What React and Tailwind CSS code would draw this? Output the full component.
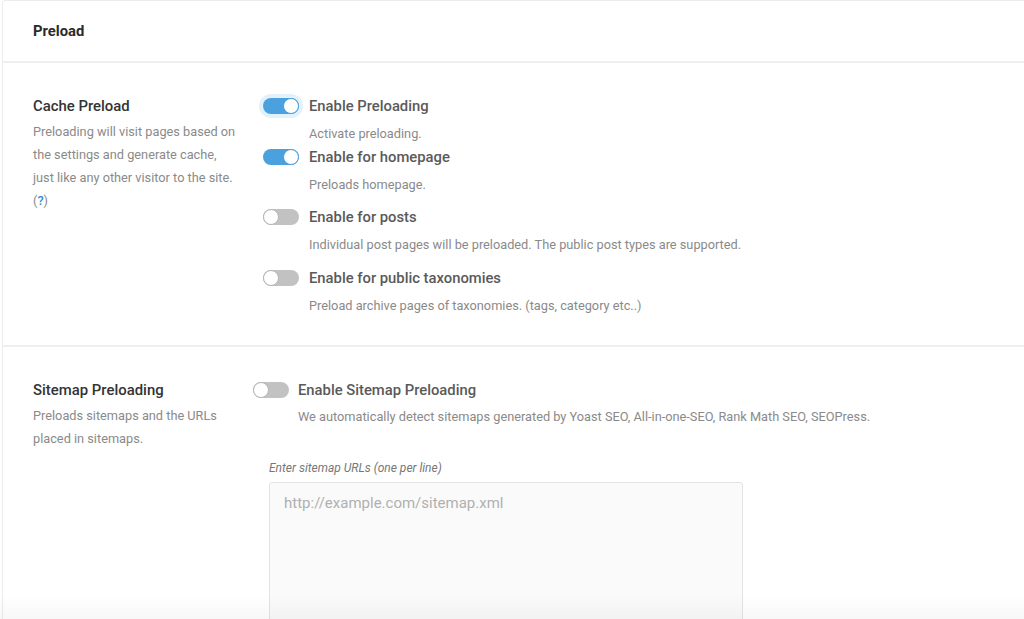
import React, { useState } from "react";

const opcionesCache = [
  {
    id: "preload",
    titulo: "Enable Preloading",
    descripcion: "Activate preloading.",
    activo: true,
    foco: true,
    margen: "mt-0"
  },
  {
    id: "homepage",
    titulo: "Enable for homepage",
    descripcion: "Preloads homepage.",
    activo: true,
    foco: false,
    margen: "mt-[3px]"
  },
  {
    id: "posts",
    titulo: "Enable for posts",
    descripcion: "Individual post pages will be preloaded. The public post types are supported.",
    activo: false,
    foco: false,
    margen: "mt-[12px]"
  },
  {
    id: "taxonomies",
    titulo: "Enable for public taxonomies",
    descripcion: "Preload archive pages of taxonomies. (tags, category etc..)",
    activo: false,
    foco: false,
    margen: "mt-[13px]"
  }
];

function Toggle({ activo, foco, onClick }) {
  return (
    <button
      type="button"
      onClick={onClick}
      className={
        "relative shrink-0 w-[36px] h-[16px] rounded-full transition-colors " +
        (activo ? "bg-[#4aa1de] " : "bg-[#c2c2c2] ") +
        (foco ? "ring-4 ring-[#e2f1fc]" : "")
      }
    >
      <span
        className={
          "absolute top-[0px] w-[16px] h-[16px] rounded-full bg-white border " +
          (activo ? "right-0 border-[#4aa1de]" : "left-0 border-[#b5b5b5]")
        }
      />
    </button>
  );
}

export default function App() {
  const [opciones, setOpciones] = useState(opcionesCache);
  const [sitemap, setSitemap] = useState(false);

  function cambiar(id) {
    setOpciones(
      opciones.map(function (opcion) {
        if (opcion.id === id) {
          return { ...opcion, activo: !opcion.activo };
        }
        return opcion;
      })
    );
  }

  return (
    <div className="relative h-[619px] overflow-hidden bg-white font-['Roboto',sans-serif]">
      <div className="ml-[2px] -mr-[10px] border-l border-t border-[#ececec] rounded-tl-[4px] bg-white">
        <div className="h-[62px] flex items-center pl-[30px] border-b-2 border-[#efefef]">
          <h1 className="text-[14.8px] font-bold text-[#2b2b2b]">Preload</h1>
        </div>

        <div className="flex pl-[30px] pt-[33px] pb-[29px] border-b-2 border-[#efefef]">
          <div className="w-[230px] shrink-0">
            <h2 className="text-[14.9px] font-medium leading-[20px] text-[#333]">Cache Preload</h2>
            <p className="mt-[4px] text-[12.75px] leading-[23px] text-[#8a8a8a] pr-[26px]">
              Preloading will visit pages based on the settings and generate cache, just like any other visitor to the site.
              <br />
              (<span className="text-[#2f8fd8] font-medium">?</span>)
            </p>
          </div>

          <div className="flex flex-col">
            {opciones.map(function (opcion) {
              return (
                <div key={opcion.id} className={opcion.margen}>
                  <div className="flex items-center gap-[10px]">
                    <Toggle
                      activo={opcion.activo}
                      foco={opcion.foco}
                      onClick={function () {
                        cambiar(opcion.id);
                      }}
                    />
                    <span className="text-[14.8px] font-medium leading-[20px] text-[#5a5a5a]">{opcion.titulo}</span>
                  </div>
                  <p className="mt-[8px] pl-[46px] text-[12.75px] leading-[20px] text-[#8a8a8a]">{opcion.descripcion}</p>
                </div>
              );
            })}
          </div>
        </div>

        <div className="flex pl-[30px] pt-[33px]">
          <div className="w-[220px] shrink-0">
            <h2 className="text-[14.9px] font-medium leading-[20px] text-[#333]">Sitemap Preloading</h2>
            <p className="mt-[4px] text-[12.75px] leading-[23px] text-[#8a8a8a] pr-[20px]">
              Preloads sitemaps and the URLs placed in sitemaps.
            </p>
          </div>

          <div className="flex flex-col">
            <div className="flex items-center gap-[9px]">
              <Toggle
                activo={sitemap}
                foco={false}
                onClick={function () {
                  setSitemap(!sitemap);
                }}
              />
              <span className="text-[14.8px] font-medium leading-[20px] text-[#5a5a5a]">Enable Sitemap Preloading</span>
            </div>
            <p className="mt-[7px] pl-[45px] text-[12.75px] leading-[20px] text-[#8a8a8a]">
              We automatically detect sitemaps generated by Yoast SEO, All-in-one-SEO, Rank Math SEO, SEOPress.
            </p>

            <div className="pl-[16px] mt-[33px]">
              <label className="block text-[12px] italic leading-[16px] text-[#777]">Enter sitemap URLs (one per line)</label>
              <textarea
                placeholder="http://example.com/sitemap.xml"
                className="mt-[6px] block w-[474px] h-[200px] resize-none rounded-[3px] border border-[#e3e3e3] bg-[#fafafa] px-[14px] py-[10px] text-[15px] leading-[20px] text-[#555] placeholder:text-[#b0b0b0] outline-none"
              />
            </div>
          </div>
        </div>
      </div>

      <div className="pointer-events-none absolute left-0 right-0 bottom-0 h-[24px] bg-gradient-to-b from-transparent to-[#00000008]" />
    </div>
  );
}
